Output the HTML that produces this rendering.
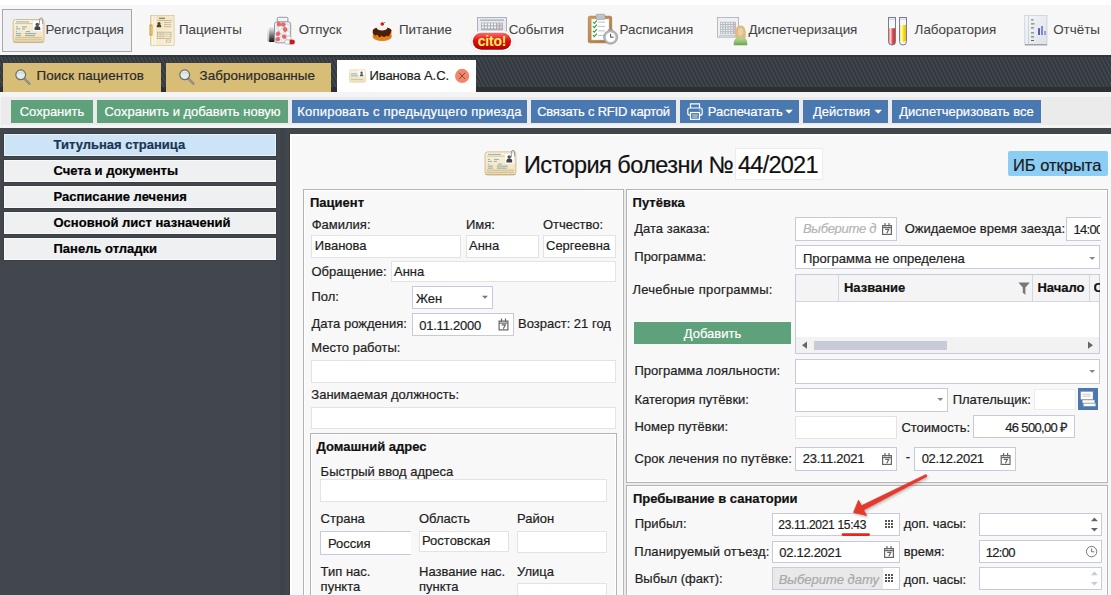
<!DOCTYPE html>
<html><head><meta charset="utf-8"><style>
html,body{margin:0;padding:0;width:1111px;height:595px;overflow:hidden;background:#41474c}
body{position:relative;font-family:"Liberation Sans",sans-serif}
div,span,svg{position:absolute}
.t{white-space:pre;line-height:1;font-family:"Liberation Sans",sans-serif;-webkit-text-stroke:0.2px currentColor}
</style></head><body>
<div style="left:0px;top:0px;width:1111px;height:5px;background:#ffffff"></div>
<div style="left:0px;top:5px;width:1111px;height:50px;background:#f7f7f7"></div>
<div style="left:2px;top:9px;width:130px;height:43px;background:#eef0f3;border:1px solid #a8a8a8;box-sizing:border-box"></div>
<span class="t" style="left:45.6px;top:23px;font-size:13.4px;color:#444444;-webkit-text-stroke:0.05px currentColor">Регистрация</span>
<span class="t" style="left:179px;top:23px;font-size:13.4px;color:#444444;-webkit-text-stroke:0.05px currentColor">Пациенты</span>
<span class="t" style="left:298.7px;top:23px;font-size:13.4px;color:#444444;-webkit-text-stroke:0.05px currentColor">Отпуск</span>
<span class="t" style="left:399px;top:23px;font-size:13.4px;color:#444444;-webkit-text-stroke:0.05px currentColor">Питание</span>
<span class="t" style="left:508.7px;top:23px;font-size:13.4px;color:#444444;-webkit-text-stroke:0.05px currentColor">События</span>
<span class="t" style="left:619.5px;top:23px;font-size:13.4px;color:#444444;-webkit-text-stroke:0.05px currentColor">Расписания</span>
<span class="t" style="left:748.4px;top:23px;font-size:13.4px;color:#444444;-webkit-text-stroke:0.05px currentColor">Диспетчеризация</span>
<span class="t" style="left:914.6px;top:23px;font-size:13.4px;color:#444444;-webkit-text-stroke:0.05px currentColor">Лаборатория</span>
<span class="t" style="left:1053.2px;top:23px;font-size:13.4px;color:#444444;-webkit-text-stroke:0.05px currentColor">Отчёты</span>
<svg style="left:0;top:55px" width="1111" height="37" shape-rendering="crispEdges"><defs><pattern id="stp" width="4" height="8" patternUnits="userSpaceOnUse"><rect x="0" y="0" width="1" height="1" fill="#42474d"/><rect x="1" y="0" width="1" height="1" fill="#373c41"/><rect x="2" y="0" width="1" height="1" fill="#32373c"/><rect x="3" y="0" width="1" height="1" fill="#3d4248"/><rect x="0" y="1" width="1" height="1" fill="#42474d"/><rect x="1" y="1" width="1" height="1" fill="#3d4248"/><rect x="2" y="1" width="1" height="1" fill="#32373c"/><rect x="3" y="1" width="1" height="1" fill="#373c41"/><rect x="0" y="2" width="1" height="1" fill="#3d4248"/><rect x="1" y="2" width="1" height="1" fill="#42474d"/><rect x="2" y="2" width="1" height="1" fill="#373c41"/><rect x="3" y="2" width="1" height="1" fill="#32373c"/><rect x="0" y="3" width="1" height="1" fill="#373c41"/><rect x="1" y="3" width="1" height="1" fill="#42474d"/><rect x="2" y="3" width="1" height="1" fill="#3d4248"/><rect x="3" y="3" width="1" height="1" fill="#32373c"/><rect x="0" y="4" width="1" height="1" fill="#32373c"/><rect x="1" y="4" width="1" height="1" fill="#3d4248"/><rect x="2" y="4" width="1" height="1" fill="#42474d"/><rect x="3" y="4" width="1" height="1" fill="#373c41"/><rect x="0" y="5" width="1" height="1" fill="#32373c"/><rect x="1" y="5" width="1" height="1" fill="#373c41"/><rect x="2" y="5" width="1" height="1" fill="#42474d"/><rect x="3" y="5" width="1" height="1" fill="#3d4248"/><rect x="0" y="6" width="1" height="1" fill="#373c41"/><rect x="1" y="6" width="1" height="1" fill="#32373c"/><rect x="2" y="6" width="1" height="1" fill="#3d4248"/><rect x="3" y="6" width="1" height="1" fill="#42474d"/><rect x="0" y="7" width="1" height="1" fill="#3d4248"/><rect x="1" y="7" width="1" height="1" fill="#32373c"/><rect x="2" y="7" width="1" height="1" fill="#373c41"/><rect x="3" y="7" width="1" height="1" fill="#42474d"/></pattern></defs><rect width="1111" height="37" fill="url(#stp)"/></svg>
<div style="left:0px;top:55px;width:1111px;height:2px;background:rgba(30,33,36,0.35)"></div>
<div style="left:0px;top:87px;width:1111px;height:5px;background:rgba(35,38,42,0.6)"></div>
<div style="left:3px;top:63px;width:158px;height:29px;background:#d8bd77"></div>
<div style="left:166px;top:63px;width:165px;height:29px;background:#d8bd77"></div>
<div style="left:337px;top:60px;width:139px;height:32px;background:#ffffff"></div>
<span class="t" style="left:36.5px;top:69px;font-size:13.4px;color:#2a2a2a;letter-spacing:0.1px">Поиск пациентов</span>
<span class="t" style="left:199.5px;top:69px;font-size:13.4px;color:#2a2a2a;letter-spacing:0.1px">Забронированные</span>
<span class="t" style="left:369.5px;top:69px;font-size:13px;color:#1e1e1e;letter-spacing:-0.1px">Иванова А.С.</span>
<div style="left:0px;top:92px;width:1111px;height:36px;background:#f4f4f4"></div>
<div style="left:1px;top:97px;width:1110px;height:28px;background:#ebebeb"></div>
<div style="left:11px;top:100px;width:82px;height:23px;background:#5ea17a"></div>
<span class="t" style="left:11px;width:82px;top:105px;font-size:13px;color:#fff;text-align:center;">Сохранить</span>
<div style="left:97px;top:100px;width:191px;height:23px;background:#5ea17a"></div>
<span class="t" style="left:97px;width:191px;top:105px;font-size:13px;color:#fff;text-align:center;">Сохранить и добавить новую</span>
<div style="left:292px;top:100px;width:235px;height:23px;background:#4a78b0"></div>
<span class="t" style="left:292px;width:235px;top:105px;font-size:13px;color:#fff;text-align:center;letter-spacing:0.2px;">Копировать с предыдущего приезда</span>
<div style="left:531px;top:100px;width:145px;height:23px;background:#4a78b0"></div>
<span class="t" style="left:531px;width:145px;top:105px;font-size:13px;color:#fff;text-align:center;letter-spacing:-0.2px;">Связать с RFID картой</span>
<div style="left:680px;top:100px;width:119px;height:23px;background:#4a78b0"></div>
<div style="left:803px;top:100px;width:85px;height:23px;background:#4a78b0"></div>
<div style="left:892px;top:100px;width:149px;height:23px;background:#4a78b0"></div>
<span class="t" style="left:892px;width:149px;top:105px;font-size:13px;color:#fff;text-align:center;">Диспетчеризовать все</span>
<span class="t" style="left:707.7px;top:105px;font-size:13px;color:#fff;">Распечатать</span>
<span class="t" style="left:813px;top:105px;font-size:13px;color:#fff;">Действия</span>
<div style="left:0px;top:128px;width:1111px;height:467px;background:#41474c"></div>
<div style="left:280px;top:128px;width:5px;height:467px;background:#3e424a"></div>
<div style="left:289px;top:134px;width:1px;height:461px;background:#383d42"></div>
<div style="left:4px;top:134px;width:272px;height:22px;background:#cde3f6;box-sizing:border-box;border:1px solid rgba(255,255,255,0.55);box-shadow:0 0 0 1px #3a3f44"></div>
<span class="t" style="left:53.5px;top:138px;font-size:13px;font-weight:bold;color:#1a3552;">Титульная страница</span>
<div style="left:4px;top:160px;width:272px;height:22px;background:#eff0f2;box-sizing:border-box;border:1px solid rgba(255,255,255,0.55);box-shadow:0 0 0 1px #3a3f44"></div>
<span class="t" style="left:53.5px;top:164px;font-size:13px;font-weight:bold;color:#000;">Счета и документы</span>
<div style="left:4px;top:186px;width:272px;height:22px;background:#eff0f2;box-sizing:border-box;border:1px solid rgba(255,255,255,0.55);box-shadow:0 0 0 1px #3a3f44"></div>
<span class="t" style="left:53.5px;top:190px;font-size:13px;font-weight:bold;color:#000;">Расписание лечения</span>
<div style="left:4px;top:212px;width:272px;height:22px;background:#eff0f2;box-sizing:border-box;border:1px solid rgba(255,255,255,0.55);box-shadow:0 0 0 1px #3a3f44"></div>
<span class="t" style="left:53.5px;top:216px;font-size:13px;font-weight:bold;color:#000;">Основной лист назначений</span>
<div style="left:4px;top:238px;width:272px;height:22px;background:#eff0f2;box-sizing:border-box;border:1px solid rgba(255,255,255,0.55);box-shadow:0 0 0 1px #3a3f44"></div>
<span class="t" style="left:53.5px;top:242px;font-size:13px;font-weight:bold;color:#000;">Панель отладки</span>
<div style="left:290px;top:134px;width:821px;height:461px;background:#f8f8f8;border-left:2px solid #fff;border-top:2px solid #fff;box-sizing:border-box"></div>
<span class="t" style="left:524px;top:154px;font-size:23.5px;color:#111;letter-spacing:-0.55px">История болезни №</span>
<div style="left:735px;top:148px;width:88px;height:32px;background:#fff;border:1px solid #ececec;box-sizing:border-box"></div>
<span class="t" style="left:738px;top:154px;font-size:23.5px;color:#111;letter-spacing:-0.75px">44/2021</span>
<div style="left:1008px;top:151px;width:100px;height:25px;background:#8ccdf6;border-radius:2px"></div>
<span class="t" style="left:1012.9px;top:157px;font-size:16.5px;color:#1a1a1a;">ИБ открыта</span>
<div style="left:624px;top:189px;width:2px;height:411px;background:#ececec"></div>
<div style="left:626px;top:483px;width:482px;height:2px;background:#ececec"></div>
<div style="left:303px;top:189px;width:321px;height:411px;background:#f8f8f8;border:1px solid #b5b5b5;box-shadow:inset 0 0 0 1px #fff;box-sizing:border-box"></div>
<div style="left:626px;top:189px;width:482px;height:294px;background:#f8f8f8;border:1px solid #b5b5b5;box-shadow:inset 0 0 0 1px #fff;box-sizing:border-box"></div>
<div style="left:626px;top:485px;width:482px;height:115px;background:#f8f8f8;border:1px solid #b5b5b5;box-shadow:inset 0 0 0 1px #fff;box-sizing:border-box"></div>
<div style="left:310px;top:433px;width:307px;height:167px;background:#f8f8f8;border:1px solid #b5b5b5;box-shadow:inset 0 0 0 1px #fff;box-sizing:border-box"></div>
<span class="t" style="left:310px;top:196px;font-size:13px;font-weight:bold;color:#111;">Пациент</span>
<span class="t" style="left:311.7px;top:218px;font-size:13px;color:#1e1e1e;">Фамилия:</span>
<span class="t" style="left:466px;top:218px;font-size:13px;color:#1e1e1e;">Имя:</span>
<span class="t" style="left:543px;top:218px;font-size:13px;color:#1e1e1e;">Отчество:</span>
<div style="left:311px;top:235px;width:150px;height:23px;background:#fff;border:1px solid #e3e3e3;box-sizing:border-box"></div>
<span class="t" style="left:314.8px;top:239px;font-size:13px;color:#1e1e1e;">Иванова</span>
<div style="left:466px;top:235px;width:73px;height:23px;background:#fff;border:1px solid #e3e3e3;box-sizing:border-box"></div>
<span class="t" style="left:469px;top:239px;font-size:13px;color:#1e1e1e;">Анна</span>
<div style="left:543px;top:235px;width:73px;height:23px;background:#fff;border:1px solid #e3e3e3;box-sizing:border-box"></div>
<span class="t" style="left:546px;top:239px;font-size:13px;color:#1e1e1e;">Сергеевна</span>
<span class="t" style="left:311.5px;top:265px;font-size:13px;color:#1e1e1e;">Обращение:</span>
<div style="left:391px;top:261px;width:225px;height:21px;background:#fff;border:1px solid #e3e3e3;box-sizing:border-box"></div>
<span class="t" style="left:394px;top:265px;font-size:13px;color:#1e1e1e;">Анна</span>
<span class="t" style="left:311.5px;top:290px;font-size:13px;color:#1e1e1e;">Пол:</span>
<div style="left:412px;top:286px;width:81px;height:23px;background:#fff;border:1px solid #c7cadb;box-sizing:border-box"></div>
<span class="t" style="left:416px;top:292px;font-size:13px;color:#1e1e1e;">Жен</span>
<span class="t" style="left:311.5px;top:317px;font-size:13px;color:#1e1e1e;">Дата рождения:</span>
<div style="left:412px;top:313px;width:102px;height:23px;background:#fff;border:1px solid #c7cadb;box-sizing:border-box"></div>
<span class="t" style="left:419.3px;top:319px;font-size:13px;color:#1e1e1e;letter-spacing:-0.25px">01.11.2000</span>
<span class="t" style="left:518px;top:317px;font-size:13px;color:#1e1e1e;">Возраст: 21 год</span>
<span class="t" style="left:311.3px;top:341px;font-size:13px;color:#1e1e1e;">Место работы:</span>
<div style="left:311px;top:360px;width:305px;height:23px;background:#fff;border:1px solid #e3e3e3;box-sizing:border-box"></div>
<span class="t" style="left:311.3px;top:388px;font-size:13px;color:#1e1e1e;">Занимаемая должность:</span>
<div style="left:311px;top:407px;width:305px;height:22px;background:#fff;border:1px solid #e3e3e3;box-sizing:border-box"></div>
<span class="t" style="left:316.6px;top:440px;font-size:13px;font-weight:bold;color:#111;">Домашний адрес</span>
<span class="t" style="left:320.6px;top:465px;font-size:13px;color:#1e1e1e;">Быстрый ввод адреса</span>
<div style="left:320px;top:479px;width:287px;height:23px;background:#fff;border:1px solid #e3e3e3;box-sizing:border-box"></div>
<span class="t" style="left:320.6px;top:512px;font-size:13px;color:#1e1e1e;">Страна</span>
<span class="t" style="left:419px;top:512px;font-size:13px;color:#1e1e1e;">Область</span>
<span class="t" style="left:517px;top:512px;font-size:13px;color:#1e1e1e;">Район</span>
<div style="left:320px;top:531px;width:91px;height:24px;background:#fff;border:1px solid #c7cadb;border-right:none;box-sizing:border-box"></div>
<span class="t" style="left:328px;top:537px;font-size:13px;color:#1e1e1e;">Россия</span>
<div style="left:419px;top:531px;width:90px;height:21px;background:#fff;border:1px solid #e3e3e3;box-sizing:border-box"></div>
<span class="t" style="left:422px;top:534px;font-size:13px;color:#1e1e1e;">Ростовская</span>
<div style="left:517px;top:531px;width:90px;height:22px;background:#fff;border:1px solid #e3e3e3;box-sizing:border-box"></div>
<span class="t" style="left:320.6px;top:565px;font-size:13px;color:#1e1e1e;">Тип нас.</span>
<span class="t" style="left:320.6px;top:580px;font-size:13px;color:#1e1e1e;">пункта</span>
<span class="t" style="left:419px;top:565px;font-size:13px;color:#1e1e1e;">Название нас.</span>
<span class="t" style="left:419px;top:580px;font-size:13px;color:#1e1e1e;">пункта</span>
<span class="t" style="left:517px;top:565px;font-size:13px;color:#1e1e1e;">Улица</span>
<div style="left:517px;top:583px;width:90px;height:17px;background:#fff;border:1px solid #e3e3e3;box-sizing:border-box"></div>
<span class="t" style="left:632.6px;top:196px;font-size:13px;font-weight:bold;color:#111;">Путёвка</span>
<span class="t" style="left:634.3px;top:222px;font-size:13px;color:#1e1e1e;">Дата заказа:</span>
<div style="left:795px;top:217px;width:102px;height:24px;background:#fff;border:1px solid #c7cadb;box-sizing:border-box"></div>
<span class="t" style="left:803px;top:222px;font-size:13px;color:#b4b4b4;font-style:italic;letter-spacing:-0.3px;width:74px;overflow:hidden">Выберите д</span>
<span class="t" style="left:904.7px;top:222px;font-size:13px;color:#1e1e1e;">Ожидаемое время заезда:</span>
<div style="left:1066px;top:217px;width:35px;height:24px;background:#fff;border:1px solid #c7cadb;border-right:none;box-sizing:border-box;overflow:hidden"></div>
<span class="t" style="left:1073.5px;top:223px;font-size:13px;color:#1e1e1e;letter-spacing:-0.7px;width:26.5px;overflow:hidden">14:00</span>
<span class="t" style="left:634.3px;top:250px;font-size:13px;color:#1e1e1e;">Программа:</span>
<div style="left:795px;top:245px;width:305px;height:24px;background:#fff;border:1px solid #c7cadb;box-sizing:border-box"></div>
<span class="t" style="left:803px;top:252px;font-size:13px;color:#1e1e1e;">Программа не определена</span>
<span class="t" style="left:632.4px;top:283px;font-size:13px;color:#1e1e1e;letter-spacing:0.25px">Лечебные программы:</span>
<div style="left:634px;top:322px;width:157px;height:22px;background:#5ea17a"></div>
<span class="t" style="left:634px;width:157px;top:327px;font-size:13px;color:#fff;text-align:center">Добавить</span>
<div style="left:795px;top:274px;width:305px;height:80px;background:#fff;border:1px solid #c7cadb;box-sizing:border-box"></div>
<div style="left:796px;top:275px;width:303px;height:27px;background:#f4f4f4;border-bottom:1px solid #d6d6e2;box-sizing:border-box"></div>
<div style="left:838px;top:275px;width:1px;height:27px;background:#d6d6e2"></div>
<div style="left:1032px;top:275px;width:1px;height:27px;background:#d6d6e2"></div>
<div style="left:1089px;top:275px;width:1px;height:27px;background:#d6d6e2"></div>
<span class="t" style="left:843.9px;top:281px;font-size:13px;font-weight:bold;color:#111;">Название</span>
<span class="t" style="left:1037.4px;top:281px;font-size:13px;font-weight:bold;color:#111;">Начало</span>
<span class="t" style="left:1093.5px;top:281px;font-size:13px;font-weight:bold;color:#111;width:6px;overflow:hidden">С</span>
<div style="left:796px;top:337px;width:303px;height:16px;background:#f2f2f2"></div>
<div style="left:814px;top:341px;width:133px;height:9px;background:#c8cad8"></div>
<span class="t" style="left:634.4px;top:364px;font-size:13px;color:#1e1e1e;">Программа лояльности:</span>
<div style="left:795px;top:359px;width:305px;height:25px;background:#fff;border:1px solid #c7cadb;box-sizing:border-box"></div>
<span class="t" style="left:634.4px;top:393px;font-size:13px;color:#1e1e1e;">Категория путёвки:</span>
<div style="left:795px;top:388px;width:153px;height:24px;background:#fff;border:1px solid #c7cadb;box-sizing:border-box"></div>
<span class="t" style="left:952.7px;top:393px;font-size:13px;color:#1e1e1e;">Плательщик:</span>
<div style="left:1034px;top:389px;width:42px;height:21px;background:#fff;border:1px solid #ececec;box-sizing:border-box"></div>
<div style="left:1078px;top:388px;width:20px;height:22px;background:#4a78b0"></div>
<span class="t" style="left:634.4px;top:420px;font-size:13px;color:#1e1e1e;">Номер путёвки:</span>
<div style="left:795px;top:416px;width:102px;height:23px;background:#fff;border:1px solid #e3e3e3;box-sizing:border-box"></div>
<span class="t" style="left:901.4px;top:421px;font-size:13px;color:#1e1e1e;">Стоимость:</span>
<div style="left:973px;top:415px;width:102px;height:23px;background:#fff;border:1px solid #c7cadb;box-sizing:border-box"></div>
<span class="t" style="left:1005.2px;top:421px;font-size:13px;color:#1e1e1e;letter-spacing:-0.65px">46 500,00 ₽</span>
<span class="t" style="left:634.4px;top:452px;font-size:13px;color:#1e1e1e;letter-spacing:0.12px">Срок лечения по путёвке:</span>
<div style="left:795px;top:447px;width:102px;height:24px;background:#fff;border:1px solid #c7cadb;box-sizing:border-box"></div>
<span class="t" style="left:802.7px;top:452px;font-size:13px;color:#1e1e1e;letter-spacing:-0.25px">23.11.2021</span>
<span class="t" style="left:905.7px;top:450px;font-size:13px;color:#1e1e1e;">-</span>
<div style="left:914px;top:447px;width:102px;height:24px;background:#fff;border:1px solid #c7cadb;box-sizing:border-box"></div>
<span class="t" style="left:921.7px;top:452px;font-size:13px;color:#1e1e1e;letter-spacing:-0.3px">02.12.2021</span>
<span class="t" style="left:633px;top:492px;font-size:13px;font-weight:bold;color:#111;">Пребывание в санатории</span>
<span class="t" style="left:634.7px;top:517px;font-size:13px;color:#1e1e1e;">Прибыл:</span>
<span class="t" style="left:634.2px;top:545px;font-size:13px;color:#1e1e1e;letter-spacing:0.1px">Планируемый отъезд:</span>
<span class="t" style="left:634.7px;top:572px;font-size:13px;color:#1e1e1e;">Выбыл (факт):</span>
<div style="left:772px;top:513px;width:128px;height:23px;background:#fff;border:1px solid #c7cadb;box-sizing:border-box"></div>
<span class="t" style="left:778.3px;top:519px;font-size:12px;color:#1e1e1e;letter-spacing:-0.3px">23.11.2021 15:43</span>
<div style="left:772px;top:541px;width:128px;height:22px;background:#fff;border:1px solid #c7cadb;box-sizing:border-box"></div>
<span class="t" style="left:779.3px;top:546px;font-size:13px;color:#1e1e1e;letter-spacing:-0.3px">02.12.2021</span>
<div style="left:772px;top:567px;width:128px;height:23px;background:#fff;border:1px solid #c7cadb;box-sizing:border-box"></div>
<div style="left:773px;top:568px;width:110px;height:21px;background:#e9e9e9"></div>
<span class="t" style="left:778.7px;top:573px;font-size:13px;color:#a8a8a8;font-style:italic">Выберите дату</span>
<span class="t" style="left:903.7px;top:517px;font-size:13px;color:#1e1e1e;">доп. часы:</span>
<span class="t" style="left:903.7px;top:545px;font-size:13px;color:#1e1e1e;">время:</span>
<span class="t" style="left:903.7px;top:573px;font-size:13px;color:#1e1e1e;">доп. часы:</span>
<div style="left:979px;top:513px;width:123px;height:23px;background:#fff;border:1px solid #c7cadb;box-sizing:border-box"></div>
<div style="left:979px;top:540px;width:123px;height:23px;background:#fff;border:1px solid #c7cadb;box-sizing:border-box"></div>
<span class="t" style="left:985.7px;top:546px;font-size:13px;color:#1e1e1e;letter-spacing:-0.7px">12:00</span>
<div style="left:979px;top:567px;width:123px;height:23px;background:#fff;border:1px solid #c7cadb;box-sizing:border-box"></div>
<svg width="1111" height="595" style="left:0;top:0;position:absolute"><defs><filter id="sh" x="-20%" y="-20%" width="140%" height="140%"><feDropShadow dx="1" dy="1.5" stdDeviation="1" flood-color="#000" flood-opacity="0.25"/></filter></defs><defs>
<linearGradient id="card" x1="0" y1="0" x2="0" y2="1"><stop offset="0" stop-color="#fcf4e0"/><stop offset="1" stop-color="#f0e0b6"/></linearGradient>
<linearGradient id="doc" x1="0" y1="0" x2="1" y2="1"><stop offset="0" stop-color="#efe0b8"/><stop offset="1" stop-color="#fbf3de"/></linearGradient>
<linearGradient id="red" x1="0" y1="0" x2="0" y2="1"><stop offset="0" stop-color="#ff6a6a"/><stop offset="0.45" stop-color="#e01010"/><stop offset="1" stop-color="#b00000"/></linearGradient>
<linearGradient id="cap" x1="0" y1="0" x2="0" y2="1"><stop offset="0" stop-color="#ffffff"/><stop offset="0.5" stop-color="#888"/><stop offset="1" stop-color="#111"/></linearGradient>
<linearGradient id="brown" x1="0" y1="0" x2="1" y2="1"><stop offset="0" stop-color="#d59a5a"/><stop offset="1" stop-color="#a8703a"/></linearGradient>
<linearGradient id="orange" x1="0" y1="0" x2="0" y2="1"><stop offset="0" stop-color="#f8c030"/><stop offset="1" stop-color="#d87010"/></linearGradient>
<linearGradient id="tubeR" x1="0" y1="0" x2="1" y2="0"><stop offset="0" stop-color="#f07070"/><stop offset="0.3" stop-color="#ffd0d0"/><stop offset="0.6" stop-color="#e04848"/><stop offset="1" stop-color="#c03030"/></linearGradient>
<linearGradient id="tubeY" x1="0" y1="0" x2="1" y2="0"><stop offset="0" stop-color="#f0e040"/><stop offset="0.3" stop-color="#ffffb0"/><stop offset="0.6" stop-color="#f8d820"/><stop offset="1" stop-color="#e8b800"/></linearGradient>
<linearGradient id="rep" x1="0" y1="0" x2="1" y2="1"><stop offset="0" stop-color="#f4f6f8"/><stop offset="1" stop-color="#dde2e8"/></linearGradient>
<linearGradient id="green" x1="0" y1="0" x2="0" y2="1"><stop offset="0" stop-color="#b8e0a0"/><stop offset="1" stop-color="#70a850"/></linearGradient>
</defs><g id="cardicon"><rect x="13.2" y="19.5" width="30.8" height="23" rx="2.5" fill="url(#card)" stroke="#d2bf90" stroke-width="1"/><rect x="13.5" y="41.5" width="30" height="1.2" fill="#b8a678" opacity="0.6"/><rect x="16" y="21.5" width="13" height="0.8" fill="#3a7aa0" opacity="0.7"/><rect x="16" y="26.5" width="2" height="0.8" fill="#3a7aa0" opacity="0.7"/><rect x="22" y="26.5" width="5" height="0.8" fill="#3a7aa0" opacity="0.7"/><rect x="16" y="28.5" width="4" height="0.8" fill="#3a7aa0" opacity="0.7"/><rect x="22" y="28.5" width="3" height="0.8" fill="#3a7aa0" opacity="0.7"/><rect x="16" y="31.3" width="1" height="0.8" fill="#3a7aa0" opacity="0.7"/><rect x="26" y="31.3" width="4" height="0.8" fill="#3a7aa0" opacity="0.7"/><rect x="16" y="33.3" width="5" height="0.8" fill="#3a7aa0" opacity="0.7"/><rect x="25" y="33.3" width="11" height="0.8" fill="#3a7aa0" opacity="0.7"/><rect x="16" y="35.3" width="5" height="0.8" fill="#3a7aa0" opacity="0.7"/><rect x="25" y="35.3" width="10" height="0.8" fill="#3a7aa0" opacity="0.7"/><rect x="15" y="23.3" width="27" height="0.8" fill="#c9b68a"/><rect x="15" y="37.3" width="27" height="0.9" fill="#c9b68a"/><rect x="15" y="39.4" width="27" height="0.9" fill="#c9b68a"/><rect x="32.6" y="20.8" width="9.8" height="10.8" fill="#fff" stroke="#ddd" stroke-width="0.5"/><circle cx="37.3" cy="24.6" r="1.8" fill="#555"/><path d="M34.5 30h5.8v-1.6c0-1.6-1.4-2.4-2.9-2.4s-2.9 0.8-2.9 2.4z" fill="#444"/><path d="M39.5 25V19.6a1.6 1.6 0 0 1 3.2 0V24" fill="none" stroke="#888" stroke-width="0.8"/></g><use href="#cardicon" transform="translate(471.9 132.4)"/><rect x="150.5" y="15.5" width="23.6" height="29.8" fill="url(#doc)" stroke="#d8c8a0" stroke-width="0.8"/><rect x="152.3" y="15.8" width="0.9" height="29.4" fill="#fff"/><rect x="154.6" y="15.8" width="0.9" height="29.4" fill="#fff"/><rect x="150" y="25" width="2" height="10" fill="none" stroke="#c89a20" stroke-width="1"/><rect x="159" y="17.8" width="6" height="0.9" fill="#6a5a40"/><rect x="157" y="20" width="15" height="0.7" fill="#b8a888"/><circle cx="159" cy="23.6" r="1.5" fill="#4a3e2c"/><path d="M156.8 27.3h4.4v-1.5c0-0.8-1-1.3-2.2-1.3s-2.2 0.5-2.2 1.3z" fill="#4a3e2c"/><rect x="164" y="22.3" width="7.2" height="0.7" fill="#b8a888"/><rect x="164" y="24.4" width="7.2" height="0.7" fill="#b8a888"/><rect x="164" y="26.4" width="7.2" height="0.7" fill="#b8a888"/><rect x="157.4" y="32.2" width="13.6" height="6.2" fill="none" stroke="#c0b090" stroke-width="0.8"/><line x1="157.4" y1="34.2" x2="171" y2="34.2" stroke="#c0b090" stroke-width="0.6"/><line x1="157.4" y1="36.3" x2="171" y2="36.3" stroke="#c0b090" stroke-width="0.6"/><line x1="160.2" y1="32.2" x2="160.2" y2="38.4" stroke="#c0b090" stroke-width="0.6"/><line x1="163" y1="32.2" x2="163" y2="38.4" stroke="#c0b090" stroke-width="0.6"/><rect x="166.2" y="40" width="4.4" height="2.2" fill="none" stroke="#c0b090" stroke-width="0.7"/><rect x="267.8" y="26.2" width="7" height="15.8" rx="1.5" fill="url(#cap)" transform="rotate(0)"/><rect x="268" y="26.2" width="1.2" height="15.8" fill="#fff" opacity="0.7"/><rect x="277.3" y="17.3" width="10.6" height="5" rx="1" fill="#f0f2f4" stroke="#8a9098" stroke-width="0.9"/><rect x="274.5" y="21.8" width="16.2" height="21" rx="2.5" fill="#eef1f4" stroke="#8a9098" stroke-width="0.9"/><g transform="translate(279.5 26.5) rotate(75)"><rect x="-4.8" y="-2.1" width="5" height="4.2" rx="2.1" fill="#e46a6a"/><rect x="-0.2" y="-2.1" width="5" height="4.2" rx="2.1" fill="#f4f6f8" stroke="#b8bcc0" stroke-width="0.4"/></g><g transform="translate(285.5 25.5) rotate(25)"><rect x="-4.8" y="-2.1" width="5" height="4.2" rx="2.1" fill="#e46a6a"/><rect x="-0.2" y="-2.1" width="5" height="4.2" rx="2.1" fill="#f4f6f8" stroke="#b8bcc0" stroke-width="0.4"/></g><g transform="translate(280 32.5) rotate(-35)"><rect x="-4.8" y="-2.1" width="5" height="4.2" rx="2.1" fill="#e46a6a"/><rect x="-0.2" y="-2.1" width="5" height="4.2" rx="2.1" fill="#f4f6f8" stroke="#b8bcc0" stroke-width="0.4"/></g><g transform="translate(286.5 31.5) rotate(55)"><rect x="-4.8" y="-2.1" width="5" height="4.2" rx="2.1" fill="#e46a6a"/><rect x="-0.2" y="-2.1" width="5" height="4.2" rx="2.1" fill="#f4f6f8" stroke="#b8bcc0" stroke-width="0.4"/></g><g transform="translate(280 38.5) rotate(-15)"><rect x="-4.8" y="-2.1" width="5" height="4.2" rx="2.1" fill="#e46a6a"/><rect x="-0.2" y="-2.1" width="5" height="4.2" rx="2.1" fill="#f4f6f8" stroke="#b8bcc0" stroke-width="0.4"/></g><g transform="translate(286.5 37.5) rotate(20)"><rect x="-4.8" y="-2.1" width="5" height="4.2" rx="2.1" fill="#e46a6a"/><rect x="-0.2" y="-2.1" width="5" height="4.2" rx="2.1" fill="#f4f6f8" stroke="#b8bcc0" stroke-width="0.4"/></g><rect x="284.5" y="39.8" width="10.3" height="4.4" rx="2.2" fill="#f4f4f4" stroke="#999" stroke-width="0.5"/><path d="M289.6 39.8h3a2.2 2.2 0 0 1 0 4.4h-3z" fill="#d01818"/><ellipse cx="382.2" cy="37" rx="9.4" ry="4" fill="#e08018"/><rect x="372.8" y="31" width="18.8" height="6" fill="url(#orange)"/><ellipse cx="382.2" cy="30.5" rx="9.4" ry="3.6" fill="#4a1e08"/><path d="M372.8 30.5v2.5c1 1.5 2 3 3 2.5s1.5-1.5 2.5 0.5 2 1 3 0 1.5 1.5 3 1 1.5-2 3-1 2-0.5 3.5-3v-2.5z" fill="#4a1e08"/><ellipse cx="382" cy="27.8" rx="5.4" ry="2.6" fill="#f4f4f4"/><circle cx="382.3" cy="24" r="1.8" fill="#d81818"/><circle cx="384.6" cy="22.6" r="0.6" fill="#40a040"/><rect x="477.5" y="17.5" width="29" height="14" fill="#e6ebf1" stroke="#a8aab0" stroke-width="0.9"/><rect x="480" y="19.6" width="24" height="1" fill="#7a8088" opacity="0.7"/><rect x="481" y="22.6" width="22" height="8" fill="#a9b0b8"/><rect x="481.8" y="23.3" width="2" height="2" fill="#f2f4f6"/><rect x="481.8" y="26.400000000000002" width="2" height="2" fill="#f2f4f6"/><rect x="484.85" y="23.3" width="2" height="2" fill="#f2f4f6"/><rect x="484.85" y="26.400000000000002" width="2" height="2" fill="#f2f4f6"/><rect x="487.90000000000003" y="23.3" width="2" height="2" fill="#f2f4f6"/><rect x="487.90000000000003" y="26.400000000000002" width="2" height="2" fill="#f2f4f6"/><rect x="490.95" y="23.3" width="2" height="2" fill="#f2f4f6"/><rect x="490.95" y="26.400000000000002" width="2" height="2" fill="#f2f4f6"/><rect x="494.0" y="23.3" width="2" height="2" fill="#f2f4f6"/><rect x="494.0" y="26.400000000000002" width="2" height="2" fill="#f2f4f6"/><rect x="497.05" y="23.3" width="2" height="2" fill="#f8c8c8"/><rect x="497.05" y="26.400000000000002" width="2" height="2" fill="#f8c8c8"/><rect x="500.1" y="23.3" width="2" height="2" fill="#f8c8c8"/><rect x="500.1" y="26.400000000000002" width="2" height="2" fill="#f8c8c8"/><rect x="471" y="30.8" width="42.5" height="21.2" rx="10.6" fill="#fff" stroke="#ddd" stroke-width="0.6"/><rect x="472.8" y="32.8" width="38.3" height="17" rx="8.5" fill="url(#red)"/><text x="492" y="45.8" text-anchor="middle" font-family="Liberation Sans" font-weight="bold" font-size="14" fill="#fff060" letter-spacing="-0.2">cito!</text><rect x="588.3" y="16.2" width="23.4" height="26.6" rx="1.5" fill="url(#brown)" stroke="#9a6a38" stroke-width="0.6"/><rect x="591.5" y="19" width="17.5" height="21" fill="#fff" stroke="#c8ccd0" stroke-width="0.5"/><rect x="596" y="14.2" width="9" height="5.2" rx="1.2" fill="#c0c4c8" stroke="#909498" stroke-width="0.6"/><path d="M593 22l1.3 1.4 2.6-3" fill="none" stroke="#30a030" stroke-width="1.1"/><rect x="598" y="21.7" width="7" height="0.8" fill="#b0b0b0"/><path d="M593 26.2l1.3 1.4 2.6-3" fill="none" stroke="#30a030" stroke-width="1.1"/><rect x="598" y="25.9" width="7" height="0.8" fill="#b0b0b0"/><path d="M593 30.8l1.3 1.4 2.6-3" fill="none" stroke="#30a030" stroke-width="1.1"/><rect x="598" y="30.5" width="7" height="0.8" fill="#b0b0b0"/><path d="M593 35.2l1.3 1.4 2.6-3" fill="none" stroke="#30a030" stroke-width="1.1"/><rect x="598" y="34.900000000000006" width="7" height="0.8" fill="#b0b0b0"/><circle cx="610.6" cy="37.2" r="7" fill="#b8bcc0" stroke="#888" stroke-width="0.6"/><circle cx="610.6" cy="37.2" r="5.3" fill="#fff" stroke="#999" stroke-width="0.5"/><rect x="608" y="29.2" width="5" height="1.6" fill="#a0a4a8"/><path d="M610.6 33.8v3.4h3" fill="none" stroke="#333" stroke-width="0.9"/><rect x="717.6" y="17.4" width="21" height="19.8" fill="#eef0f3" stroke="#a8acb2" stroke-width="0.8"/><rect x="719" y="35" width="18.5" height="1.5" fill="#c8ccd2"/><rect x="720" y="21.8" width="16" height="12.4" fill="#b4bac2"/><rect x="720.8" y="22.6" width="1.5" height="1.4" fill="#f4f6f8"/><rect x="720.8" y="25.0" width="1.5" height="1.4" fill="#f4f6f8"/><rect x="720.8" y="27.400000000000002" width="1.5" height="1.4" fill="#f4f6f8"/><rect x="720.8" y="29.8" width="1.5" height="1.4" fill="#f4f6f8"/><rect x="720.8" y="32.2" width="1.5" height="1.4" fill="#f4f6f8"/><rect x="723.4" y="22.6" width="1.5" height="1.4" fill="#f4f6f8"/><rect x="723.4" y="25.0" width="1.5" height="1.4" fill="#f4f6f8"/><rect x="723.4" y="27.400000000000002" width="1.5" height="1.4" fill="#f4f6f8"/><rect x="723.4" y="29.8" width="1.5" height="1.4" fill="#f4f6f8"/><rect x="723.4" y="32.2" width="1.5" height="1.4" fill="#f4f6f8"/><rect x="726.0" y="22.6" width="1.5" height="1.4" fill="#f4f6f8"/><rect x="726.0" y="25.0" width="1.5" height="1.4" fill="#f4f6f8"/><rect x="726.0" y="27.400000000000002" width="1.5" height="1.4" fill="#f4f6f8"/><rect x="726.0" y="29.8" width="1.5" height="1.4" fill="#f4f6f8"/><rect x="726.0" y="32.2" width="1.5" height="1.4" fill="#f4f6f8"/><rect x="728.5999999999999" y="22.6" width="1.5" height="1.4" fill="#f4f6f8"/><rect x="728.5999999999999" y="25.0" width="1.5" height="1.4" fill="#f4f6f8"/><rect x="728.5999999999999" y="27.400000000000002" width="1.5" height="1.4" fill="#f4f6f8"/><rect x="728.5999999999999" y="29.8" width="1.5" height="1.4" fill="#f4f6f8"/><rect x="728.5999999999999" y="32.2" width="1.5" height="1.4" fill="#f4f6f8"/><rect x="731.1999999999999" y="22.6" width="1.5" height="1.4" fill="#f4f6f8"/><rect x="731.1999999999999" y="25.0" width="1.5" height="1.4" fill="#f4f6f8"/><rect x="731.1999999999999" y="27.400000000000002" width="1.5" height="1.4" fill="#f4f6f8"/><rect x="731.1999999999999" y="29.8" width="1.5" height="1.4" fill="#f4f6f8"/><rect x="731.1999999999999" y="32.2" width="1.5" height="1.4" fill="#f4f6f8"/><rect x="733.8" y="22.6" width="1.5" height="1.4" fill="#f4b8c0"/><rect x="733.8" y="25.0" width="1.5" height="1.4" fill="#f4b8c0"/><rect x="733.8" y="27.400000000000002" width="1.5" height="1.4" fill="#f4b8c0"/><rect x="733.8" y="29.8" width="1.5" height="1.4" fill="#f4b8c0"/><rect x="733.8" y="32.2" width="1.5" height="1.4" fill="#f4b8c0"/><path d="M734 45c0-5 1.5-7 6.5-7.5s6.5 2.5 6.5 7.5z" fill="url(#green)" stroke="#6a9a4a" stroke-width="0.5"/><path d="M735.5 38c-1-6 0-12.5 5-12.5s6 6.5 5 12.5z" fill="#d8c074"/><ellipse cx="740.5" cy="32" rx="2.6" ry="4" fill="#f0c8b8"/><path d="M888.5 28.3h7v13.5a3.5 3.5 0 0 1 -7 0z" fill="url(#tubeR)"/><path d="M888.5 17.5v24a3.5 3.5 0 0 0 7 0v-24" fill="none" stroke="#777b95" stroke-width="1"/><line x1="888" y1="17.5" x2="896" y2="17.5" stroke="#777b95" stroke-width="1"/><line x1="889" y1="19.2" x2="895" y2="19.2" stroke="#b8bccc" stroke-width="0.6"/><path d="M899.5 25.1h7v13.5a3.5 3.5 0 0 1 -7 0z" fill="url(#tubeY)"/><path d="M899.5 17.5v24a3.5 3.5 0 0 0 7 0v-24" fill="none" stroke="#777b95" stroke-width="1"/><line x1="899" y1="17.5" x2="907" y2="17.5" stroke="#777b95" stroke-width="1"/><line x1="900" y1="19.2" x2="906" y2="19.2" stroke="#b8bccc" stroke-width="0.6"/><rect x="1024.8" y="15.6" width="22.2" height="29.5" fill="url(#rep)" stroke="#c0c4c8" stroke-width="0.6"/><rect x="1025" y="44" width="22" height="1.3" fill="#a0a4a8"/><line x1="1028.5" y1="16" x2="1028.5" y2="44" stroke="#c8ccd0" stroke-width="0.8"/><rect x="1031" y="19.5" width="2.5" height="0.8" fill="#444"/><rect x="1031" y="23.5" width="3.5" height="0.8" fill="#444"/><rect x="1031" y="27.5" width="3" height="0.8" fill="#444"/><rect x="1031" y="32.5" width="3" height="0.8" fill="#444"/><rect x="1031" y="36.5" width="3" height="0.8" fill="#444"/><rect x="1031" y="40" width="3" height="0.8" fill="#444"/><rect x="1038" y="28.2" width="2" height="6.8" fill="#5860b0"/><rect x="1041" y="26" width="2" height="9" fill="#8088d8"/><rect x="1044" y="31" width="2" height="4" fill="#9aa0e0"/><line x1="24.2" y1="78.5" x2="29.5" y2="83.8" stroke="#777" stroke-width="2.2" stroke-linecap="round"/><line x1="24.2" y1="78.5" x2="29.5" y2="83.8" stroke="#bbb" stroke-width="0.8" stroke-linecap="round"/><circle cx="20.7" cy="74.8" r="4.9" fill="#e2ecee" stroke="#6e6e60" stroke-width="1.2"/><path d="M17.4 73.5q3.3-2 6.6 0" fill="none" stroke="#b0c8d0" stroke-width="0.7"/><line x1="188.2" y1="78.5" x2="193.5" y2="83.8" stroke="#777" stroke-width="2.2" stroke-linecap="round"/><line x1="188.2" y1="78.5" x2="193.5" y2="83.8" stroke="#bbb" stroke-width="0.8" stroke-linecap="round"/><circle cx="184.7" cy="74.8" r="4.9" fill="#e2ecee" stroke="#6e6e60" stroke-width="1.2"/><path d="M181.39999999999998 73.5q3.3-2 6.6 0" fill="none" stroke="#b0c8d0" stroke-width="0.7"/><rect x="349.5" y="69.8" width="16" height="12.4" rx="1.5" fill="url(#card)" stroke="#e0d0a8" stroke-width="0.6"/><rect x="351" y="73.5" width="6" height="0.8" fill="#6aa8c8"/><rect x="351" y="75.5" width="7" height="0.8" fill="#6aa8c8"/><rect x="351" y="79" width="12" height="0.7" fill="#c8b890"/><rect x="358.6" y="70.6" width="6" height="6.4" fill="#fff"/><circle cx="361.6" cy="72.8" r="1.2" fill="#555"/><path d="M359.8 76.2h3.6v-0.8c0-0.8-0.8-1.2-1.8-1.2s-1.8 0.4-1.8 1.2z" fill="#555"/><circle cx="462.1" cy="75.9" r="7.1" fill="#f4866c"/><path d="M459 72.8l6.2 6.2M465.2 72.8l-6.2 6.2" stroke="#7a4a3e" stroke-width="1"/><g fill="none" stroke="#fff" stroke-width="1.2"><path d="M690.5 108v-4.2h9v4.2"/><rect x="687.8" y="108" width="14.4" height="7.2" rx="2"/><rect x="690.5" y="112.5" width="9" height="6.8" fill="#4a78b0"/><line x1="692.3" y1="115" x2="697.7" y2="115" stroke-width="0.8"/><line x1="692.3" y1="117" x2="697.7" y2="117" stroke-width="0.8"/></g><circle cx="699.8" cy="110" r="0.6" fill="#fff"/><path d="M785.2 109.8h7.6l-3.8 4z" fill="#fff"/><path d="M874.4000000000001 109.8h7.6l-3.8 4z" fill="#fff"/><path d="M482.0 295.7h6l-3.0 3z" fill="#777"/><g fill="none" stroke="#666" stroke-width="1.2">
<rect x="499.1" y="321.1" width="8.8" height="8.8"/>
<line x1="499.1" y1="323.1" x2="507.9" y2="323.1"/>
<line x1="501.5" y1="318.5" x2="501.5" y2="322.0"/><line x1="505.5" y1="318.5" x2="505.5" y2="322.0"/>
<path d="M501.7 324.9h3.6l-2 3.8"/></g><g fill="none" stroke="#666" stroke-width="1.2">
<rect x="882.6" y="225.6" width="8.8" height="8.8"/>
<line x1="882.6" y1="227.6" x2="891.4" y2="227.6"/>
<line x1="885" y1="223" x2="885" y2="226.5"/><line x1="889" y1="223" x2="889" y2="226.5"/>
<path d="M885.2 229.4h3.6l-2 3.8"/></g><path d="M1089.2 256.9h6l-3.0 3z" fill="#888"/><path d="M1089.2 369.9h6l-3.0 3z" fill="#888"/><path d="M937.3 397.9h6l-3.0 3z" fill="#888"/><g fill="none" stroke="#666" stroke-width="1.2">
<rect x="882.6" y="455.6" width="8.8" height="8.8"/>
<line x1="882.6" y1="457.6" x2="891.4" y2="457.6"/>
<line x1="885" y1="453" x2="885" y2="456.5"/><line x1="889" y1="453" x2="889" y2="456.5"/>
<path d="M885.2 459.4h3.6l-2 3.8"/></g><g fill="none" stroke="#666" stroke-width="1.2">
<rect x="1001.2" y="455.6" width="8.8" height="8.8"/>
<line x1="1001.2" y1="457.6" x2="1010.0" y2="457.6"/>
<line x1="1003.6" y1="453" x2="1003.6" y2="456.5"/><line x1="1007.6" y1="453" x2="1007.6" y2="456.5"/>
<path d="M1003.8000000000001 459.4h3.6l-2 3.8"/></g><rect x="885" y="520" width="2" height="2" fill="#555"/><rect x="885" y="523" width="2" height="2" fill="#555"/><rect x="885" y="526" width="2" height="2" fill="#555"/><rect x="888" y="520" width="2" height="2" fill="#555"/><rect x="888" y="523" width="2" height="2" fill="#555"/><rect x="888" y="526" width="2" height="2" fill="#555"/><rect x="891" y="520" width="2" height="2" fill="#555"/><rect x="891" y="523" width="2" height="2" fill="#555"/><rect x="891" y="526" width="2" height="2" fill="#555"/><g fill="none" stroke="#666" stroke-width="1.2">
<rect x="884.6" y="548.6" width="8.8" height="8.8"/>
<line x1="884.6" y1="550.6" x2="893.4" y2="550.6"/>
<line x1="887" y1="546" x2="887" y2="549.5"/><line x1="891" y1="546" x2="891" y2="549.5"/>
<path d="M887.2 552.4h3.6l-2 3.8"/></g><rect x="885" y="574" width="2" height="2" fill="#555"/><rect x="885" y="577" width="2" height="2" fill="#555"/><rect x="885" y="580" width="2" height="2" fill="#555"/><rect x="888" y="574" width="2" height="2" fill="#555"/><rect x="888" y="577" width="2" height="2" fill="#555"/><rect x="888" y="580" width="2" height="2" fill="#555"/><rect x="891" y="574" width="2" height="2" fill="#555"/><rect x="891" y="577" width="2" height="2" fill="#555"/><rect x="891" y="580" width="2" height="2" fill="#555"/><path d="M1090.9 521.1999999999999h7l-3.5 -3.6z" fill="#666"/><path d="M1090.9 528.0h7l-3.5 3.6z" fill="#666"/><path d="M1090.9 575.1999999999999h7l-3.5 -3.6z" fill="#c8cad8"/><path d="M1090.9 582.0h7l-3.5 3.6z" fill="#c8cad8"/><circle cx="1091.6" cy="551.6" r="5.2" fill="none" stroke="#777" stroke-width="1"/><path d="M1091.6 548.4v3.4h2.8" fill="none" stroke="#777" stroke-width="1"/><path d="M1018.4 282.4h11.4l-4.4 5v7.4l-2.6-2v-5.4z" fill="#777"/><path d="M802 345.2l5-3.6v7.2z" fill="#666"/><path d="M1093 345.2l-5-3.6v7.2z" fill="#666"/><rect x="1083.3" y="403.2" width="12.4" height="3" fill="#fff" stroke="#999" stroke-width="0.5"/><rect x="1082.3" y="400" width="12.4" height="3" fill="#fff" stroke="#999" stroke-width="0.5"/><rect x="1080.8" y="391.6" width="12.2" height="7.8" fill="#fff" stroke="#999" stroke-width="0.5"/><rect x="1082.5" y="393.8" width="8" height="0.8" fill="#bbb"/><rect x="1082.5" y="395.8" width="8" height="0.8" fill="#bbb"/><g filter="url(#sh)"><path d="M925.46 474.63 L861.52 505.62 L858.5 500 L853.4 512.5 L866.8 515.7 L863.78 510.08 L926.54 476.77 z" fill="#e23a2e" stroke="#e23a2e" stroke-width="0.6" stroke-linejoin="round"/><circle cx="926" cy="475.7" r="1.2" fill="#e23a2e"/></g><line x1="843" y1="534.6" x2="868.6" y2="534.6" stroke="#e02a20" stroke-width="2.8" stroke-linecap="round"/></svg>
</body></html>
